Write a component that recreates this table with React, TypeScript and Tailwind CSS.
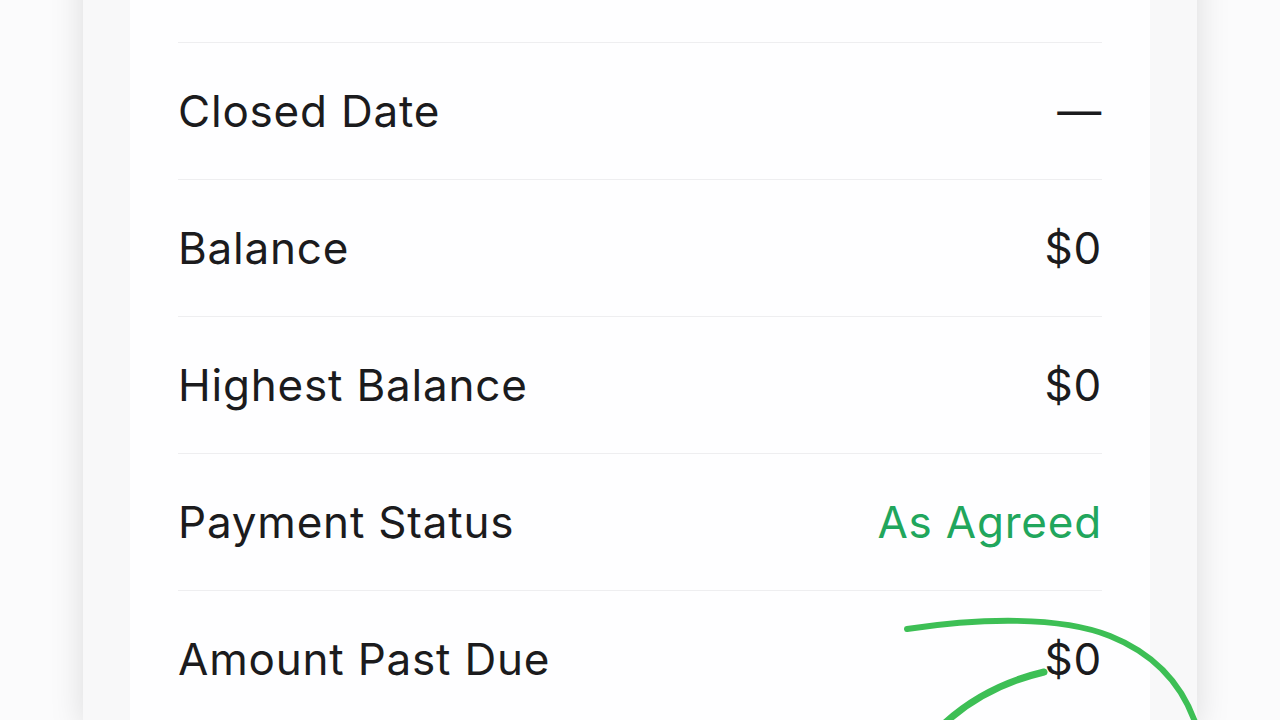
import React from "react";

const rows: { label: string; value: string; green?: boolean }[] = [
  { label: "Open Date", value: "Jan 15, 2019" },
  { label: "Closed Date", value: "—" },
  { label: "Balance", value: "$0" },
  { label: "Highest Balance", value: "$0" },
  { label: "Payment Status", value: "As Agreed", green: true },
  { label: "Amount Past Due", value: "$0" },
];

export default function App() {
  return (
    <div
      className="relative h-[720px] w-[1280px] overflow-hidden bg-[#fbfbfc]"
      style={{ fontFamily: "Inter, 'Noto Sans', sans-serif" }}
    >
      <div className="ml-[83px] min-h-[760px] w-[1114px] bg-[#f8f8f9] pl-[47px] shadow-[0_0_32px_rgba(0,0,0,0.13)]">
        <div className="min-h-[760px] w-[1020px] bg-[#fefeff] px-[48px]">
          <div className="-mt-[94px]">
            {rows.map((r) => (
              <div
                key={r.label}
                className="flex h-[137px] items-center justify-between border-b border-[#eeeef0] text-[44px] tracking-[0.8px] text-[#1b1b1d]"
              >
                <span>{r.label}</span>
                <span className={r.green ? "text-[#21a65c]" : ""}>{r.value}</span>
              </div>
            ))}
          </div>
        </div>
      </div>
      <svg
        className="pointer-events-none absolute left-0 top-0"
        width="1280"
        height="720"
        viewBox="0 0 1280 720"
        fill="none"
      >
        <path
          d="M907 629 C 980 618, 1060 616, 1110 636 C 1150 652, 1180 680, 1195 722"
          stroke="#3dbf55"
          strokeWidth="6"
          strokeLinecap="round"
        />
        <path
          d="M1044 672 C 1010 680, 975 696, 946 722"
          stroke="#3dbf55"
          strokeWidth="7"
          strokeLinecap="round"
        />
      </svg>
    </div>
  );
}
